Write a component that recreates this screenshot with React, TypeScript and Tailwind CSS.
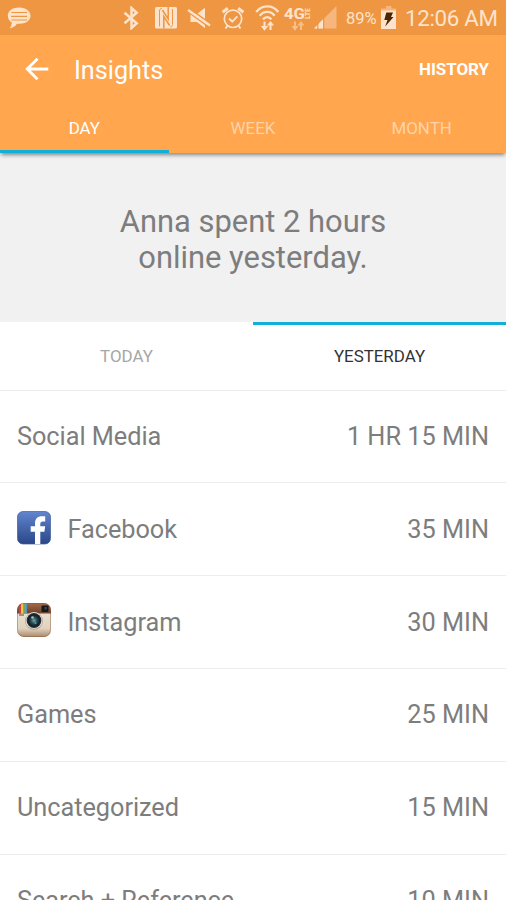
import type { ReactNode } from "react";

type Entry = {
  label: string;
  time: string;
  icon?: ReactNode;
};

function MessageIcon() {
  return (
    <svg className="ml-[7px] h-[24px] w-[25px]" viewBox="0 0 25 24">
      <path
        d="M12.300 1.500C5.500 1.500 .8 5 .8 9.800c0 2.900 1.500 5.200 4 6.600-.1 2.200-.9 4.300-2.300 6.100 3.400-.7 6-2.400 7.400-4.800l2.400.1c6.700 0 11.200-3.400 11.200-8s-4.500-8.300-11.200-8.300z"
        fill="#fde3cb"
      />
      <path d="M4.300 6.500h15.800M4 10.300h16.100M4.300 14h15.800" stroke="#ee9641" strokeWidth="1.200" />
    </svg>
  );
}

function BluetoothIcon() {
  return (
    <svg className="h-[24px] w-[17px]" viewBox="0 0 17 24">
      <path
        d="M1.500 6.800l12.200 10.500-5.200 4.700V2l5.200 4.700L1.500 17.200"
        fill="none"
        stroke="#fde3cb"
        strokeWidth="2.500"
      />
    </svg>
  );
}

function NfcIcon() {
  return (
    <svg className="ml-[15px] h-[22px] w-[22px]" viewBox="0 0 22 22">
      <rect width="22" height="21.500" rx="1.500" fill="#fde3cb" />
      <path
        d="M4.500 19.500V4c0-1.500.8-2.500 2.300-2.500M17.500 2v15.500c0 1.500-.8 2.500-2.300 2.500"
        fill="none"
        stroke="#ee9641"
        strokeWidth="1"
      />
      <path d="M8.800 21.500V9.500l5.800 9M13.200 0v12L7.400 3" fill="none" stroke="#ee9641" strokeWidth="1.500" />
    </svg>
  );
}

function MuteIcon() {
  return (
    <svg className="ml-[10px] h-[24px] w-[24px]" viewBox="0 0 24 24">
      <path d="M3.500 8h6.500l8-6.300v20.600L10 16H3.500z" fill="#fde3cb" />
      <path d="M1.500 6L23 21.500" stroke="#ee9641" strokeWidth="2" />
      <path d="M1.500 2L23 17.500" stroke="#ee9641" strokeWidth="1.600" />
      <path d="M1 4l22 15.500" stroke="#fde3cb" strokeWidth="2.400" />
    </svg>
  );
}

function AlarmIcon() {
  return (
    <svg className="ml-[10px] h-[24px] w-[24px]" viewBox="0 0 24 24" fill="none" stroke="#fde3cb">
      <circle cx="12" cy="12.800" r="8.700" strokeWidth="1.700" />
      <path d="M1.600 6.200l5.200-4M22.400 6.200l-5.200-4" strokeWidth="3" />
      <path d="M8 12.500l3.300 3.200 5-5.400" strokeWidth="1.900" />
      <path d="M6.300 20l-1.800 2.500M17.700 20l1.800 2.500" strokeWidth="2" />
    </svg>
  );
}

function WifiIcon() {
  return (
    <svg className="ml-[10px] h-[28px] w-[24px]" viewBox="0 0 24 28" fill="none" stroke="#fde3cb">
      <path d="M1.200 8C7 .4 17.500 .4 23.300 8" strokeWidth="2.300" />
      <path d="M4.700 11.800c4-5.200 11-5.200 15 0" strokeWidth="2.300" />
      <path d="M8 15.400c2.200-3 6.200-3 8.400 0" strokeWidth="2.300" />
      <path d="M9.500 17.500v6M15.500 26V19" strokeWidth="2" />
      <path d="M5.800 22h7.400l-3.700 4.800zM11.800 21.500h7.400l-3.700-4.500z" fill="#fde3cb" stroke="none" />
    </svg>
  );
}

function NetworkIcon() {
  return (
    <svg className="ml-[5px] h-[28px] w-[28px]" viewBox="0 0 28 28">
      <text
        x="0"
        y="15"
        textLength="21"
        lengthAdjust="spacingAndGlyphs"
        fontFamily="Roboto, sans-serif"
        fontSize="15"
        fontWeight="700"
        fill="#fde3cb"
      >
        4G
      </text>
      <text
        transform="translate(26.200 15) rotate(-90)"
        textLength="10.800"
        lengthAdjust="spacingAndGlyphs"
        fontFamily="Roboto, sans-serif"
        fontSize="6.500"
        fontWeight="700"
        fill="#fde3cb"
      >
        LTE
      </text>
      <path d="M11 17.500v6M17 26v-6" stroke="#f8bf8b" strokeWidth="1.900" />
      <path d="M7.500 22h7L11 26.800zM13.500 21.500h7L17 17z" fill="#f8bf8b" />
    </svg>
  );
}

function SignalIcon() {
  return (
    <svg className="ml-[2px] h-[23px] w-[23px]" viewBox="0 0 23 23">
      <path d="M0 22.500L22.500 0v22.500z" fill="#f6b67d" />
      <path d="M0 22.500L9.200 13v9.500z" fill="#fde3cb" />
      <path d="M3.800 17v6M9.700 12v11" stroke="#ee9641" strokeWidth="1.200" />
    </svg>
  );
}

function BatteryIcon() {
  return (
    <svg className="ml-[4px] h-[23px] w-[15px]" viewBox="0 0 15 23">
      <path d="M5 0h5.500v2.500H15V6H0V2.500h5z" fill="#f6b67d" />
      <path d="M0 4.500h15V23H0z" fill="#fde3cb" />
      <path d="M5.300 6.500H12l-2 4.500h2.500L4.200 20.500 6.500 14H3.300z" fill="#4a2608" />
    </svg>
  );
}

function BackIcon() {
  return (
    <svg className="h-[24px] w-[24px]" viewBox="0 0 24 24" fill="none" stroke="#fff" strokeWidth="2.800">
      <path d="M12.500 1.700L2.200 12l10.300 10.300M2.500 12h20.800" />
    </svg>
  );
}

function FacebookIcon() {
  return (
    <svg className="h-[34px] w-[34px]" viewBox="0 0 34 34">
      <defs>
        <linearGradient id="fb" x1="0" y1="0" x2="0" y2="1">
          <stop offset="0" stopColor="#6285cf" />
          <stop offset="1" stopColor="#2a4788" />
        </linearGradient>
      </defs>
      <rect x=".5" y=".5" width="33" height="32.500" rx="5.500" fill="url(#fb)" stroke="#3c5c9f" strokeWidth=".7" />
      <path
        d="M18 33V20.800h-4.300v-5.500H18v-2.900c0-4.800 2.700-7.100 6.800-7.100h3.400v5.200h-2.400c-1.900 0-2.500.9-2.500 2.500v2.300h4.900l-.8 5.500h-4.100V33z"
        fill="#fff"
      />
    </svg>
  );
}

function InstagramIcon() {
  return (
    <svg className="h-[34px] w-[34px]" viewBox="0 0 34 34">
      <defs>
        <clipPath id="igClip">
          <rect width="34" height="34" rx="7" />
        </clipPath>
        <linearGradient id="igBody" x1="0" y1="0" x2="0" y2="1">
          <stop offset=".3" stopColor="#e9dfd0" />
          <stop offset=".75" stopColor="#e0d2bd" />
          <stop offset="1" stopColor="#a9876a" />
        </linearGradient>
        <linearGradient id="igTop" x1="0" y1="0" x2="0" y2="1">
          <stop offset="0" stopColor="#a5694a" />
          <stop offset="1" stopColor="#70402a" />
        </linearGradient>
        <radialGradient id="igLens">
          <stop offset="0" stopColor="#7fa8a8" />
          <stop offset=".45" stopColor="#2c5561" />
          <stop offset="1" stopColor="#10171f" />
        </radialGradient>
      </defs>
      <g clipPath="url(#igClip)">
        <path d="M0 0h34v34H0z" fill="url(#igBody)" />
        <path d="M0 0h34v10.500H0z" fill="url(#igTop)" />
        <path d="M2 0h2v10.500H2z" fill="#d93d3f" />
        <path d="M4 0h2v10.500H4z" fill="#f5c844" />
        <path d="M6 0h1.800v10.500H6z" fill="#79b84a" />
        <path d="M7.800 0h2v10.500h-2z" fill="#4aa5df" />
        <path d="M2 12h5" stroke="#83786c" strokeWidth="1.300" />
        <rect x="24.500" y="2.500" width="7" height="6.500" rx="1" fill="#14171c" />
        <rect x="27.500" y="4" width="2.200" height="2.500" fill="#34515b" />
        <rect x=".5" y=".5" width="33" height="33" rx="6.500" fill="none" stroke="#835438" strokeOpacity=".4" />
      </g>
      <circle cx="17" cy="18" r="9" fill="#b5a89a" />
      <circle cx="17" cy="17.500" r="8.300" fill="#ede8df" />
      <circle cx="17" cy="17.500" r="7.400" fill="#252b31" />
      <circle cx="17" cy="17.500" r="6" fill="url(#igLens)" />
      <circle cx="15.500" cy="14.500" r="1.300" fill="#a7c5ba" />
      <circle cx="18.500" cy="20" r="1" fill="#6796a3" />
    </svg>
  );
}

const entries: Entry[] = [
  { label: "Social Media", time: "1 HR 15 MIN" },
  { label: "Facebook", time: "35 MIN", icon: <FacebookIcon /> },
  { label: "Instagram", time: "30 MIN", icon: <InstagramIcon /> },
  { label: "Games", time: "25 MIN" },
  { label: "Uncategorized", time: "15 MIN" },
  { label: "Search + Reference", time: "10 MIN" },
];

function StatusBar() {
  return (
    <div className="flex h-[35px] items-center bg-[#ee9641] text-[#fde3cb]">
      <MessageIcon />
      <div className="ml-auto flex items-center pr-[8px]">
        <BluetoothIcon />
        <NfcIcon />
        <MuteIcon />
        <AlarmIcon />
        <WifiIcon />
        <NetworkIcon />
        <SignalIcon />
        <span className="ml-[9px] w-[31px] pt-[3px] text-[16.500px] whitespace-nowrap">89%</span>
        <BatteryIcon />
        <span className="ml-[9px] w-[93px] pt-[3px] text-[22.300px] tracking-[-0.300px] whitespace-nowrap">
          12:06 AM
        </span>
      </div>
    </div>
  );
}

function Header() {
  return (
    <header className="relative z-10 h-[118px] bg-[#ffa64f] text-white shadow-[0_3px_4px_-1px_rgba(0,0,0,0.45)]">
      <div className="flex h-[68px] items-center pr-[17px] pl-[25px]">
        <BackIcon />
        <h1 className="ml-[25px] pt-[3px] text-[25.200px]">Insights</h1>
        <button className="ml-auto pt-[2px] text-[16.900px] font-bold">HISTORY</button>
      </div>
      <nav className="grid h-[50px] grid-cols-3 text-[16.900px]">
        <button className="border-b-[3px] border-[#12b0d8] pt-[4px]">DAY</button>
        <button className="border-b-[3px] border-transparent pt-[4px] text-[#ffd3a7]">WEEK</button>
        <button className="border-b-[3px] border-transparent pt-[4px] text-[#ffd3a7]">MONTH</button>
      </nav>
    </header>
  );
}

export default function App() {
  return (
    <div className="h-[900px] w-[506px] overflow-hidden bg-white font-['Roboto',sans-serif] text-[#7d7d7d]">
      <StatusBar />
      <Header />

      {/* Summary */}
      <section className="flex h-[169px] items-center justify-center bg-[#f1f1f1] pt-[5px] text-center text-[30.900px] leading-[36px]">
        <p>
          Anna spent 2 hours
          <br />
          online yesterday.
        </p>
      </section>

      <div className="grid h-[67.500px] grid-cols-2 text-[16.900px]">
        <button className="border-t-[3px] border-transparent pb-px text-[#a6a6a6]">TODAY</button>
        <button className="border-t-[3px] border-[#12b0d8] pb-px text-[#333]">YESTERDAY</button>
      </div>

      {/* Usage list */}
      <ul>
        {entries.map((entry) => (
          <li
            key={entry.label}
            className="flex h-[92.850px] items-center border-t-[1.500px] border-[#ededed] px-[17px] text-[25.300px]"
          >
            {entry.icon && <div className="mr-[16.500px] pb-[3.500px]">{entry.icon}</div>}
            <span className="pt-px tracking-[-0.040px]">{entry.label}</span>
            <span className="ml-auto pt-px">{entry.time}</span>
          </li>
        ))}
      </ul>
    </div>
  );
}
